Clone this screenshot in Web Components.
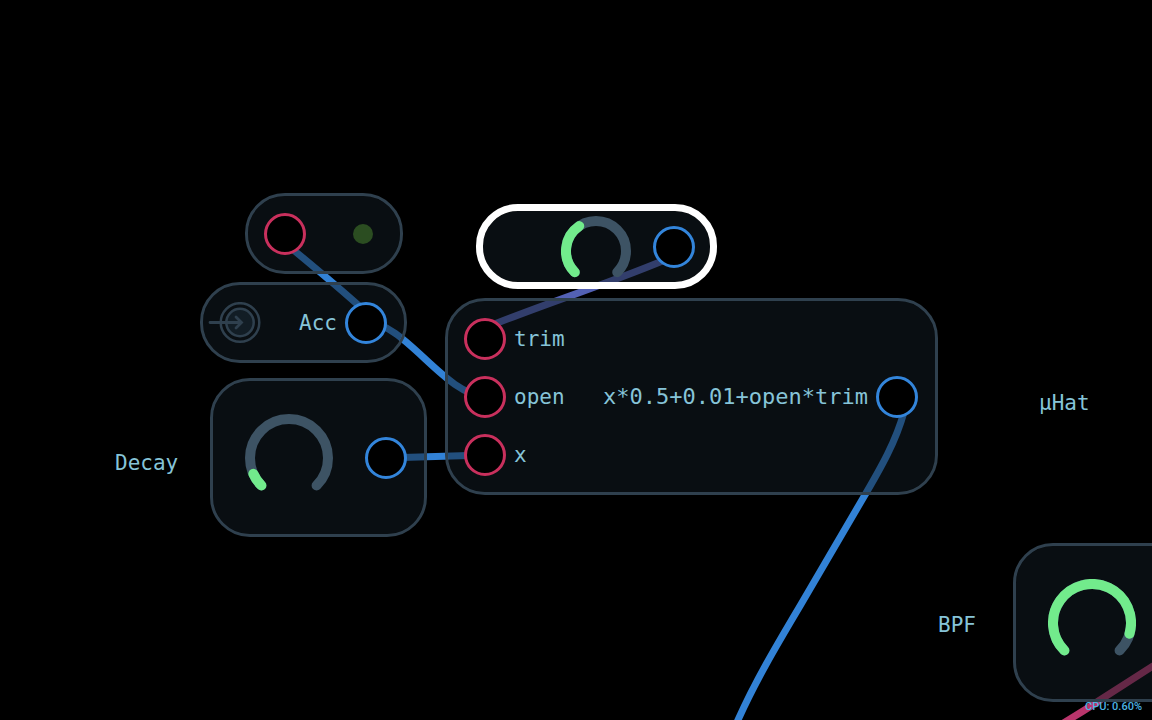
<!DOCTYPE html>
<html lang="en">
<head>
<meta charset="utf-8">
<title>Patch editor</title>
<style>
html, body { margin: 0; height: 100%; background: #000; }
body {
  font: 21px/24px "DejaVu Sans Mono", monospace;
  color: #86c4d8;
  --edge: #2f404e; --in: #c9305d; --out: #3385db; --track: #3d5364; --level: #72eb8c;
}
</style>
</head>
<body>
<patch-canvas>
  <patch-wires slot="wires"></patch-wires>

  <patch-node style="left:245px;top:193px;width:158px;height:81px">
    <patch-port kind="in" label="Light input"></patch-port>
    <patch-led></patch-led>
  </patch-node>

  <patch-node style="left:200px;top:282px;width:207px;height:81px">
    <patch-inlet></patch-inlet>
    <patch-port kind="out" label="Acc output">Acc</patch-port>
  </patch-node>

  <patch-node selected style="left:476px;top:204px;width:241px;height:85px">
    <patch-knob size="70" height="62" sweep="101" label="Trim"></patch-knob>
    <patch-port kind="out" label="Trim output"></patch-port>
  </patch-node>

  <patch-node style="left:445px;top:298px;width:493px;height:197px">
    <patch-stack>
      <patch-port kind="in" label="trim input">trim</patch-port>
      <patch-port kind="in" label="open input">open</patch-port>
      <patch-port kind="in" label="x input">x</patch-port>
    </patch-stack>
    <patch-port kind="out" label="Expression output" wide>x*0.5+0.01+open*trim</patch-port>
  </patch-node>

  <patch-node roomy style="left:210px;top:378px;width:217px;height:159px">
    <patch-knob size="88" height="88" sweep="21" label="Decay"></patch-knob>
    <patch-port kind="out" label="Decay output"></patch-port>
  </patch-node>

  <patch-node roomy style="left:1013px;top:543px;width:217px;height:159px">
    <patch-knob size="88" height="88" sweep="241" label="BPF"></patch-knob>
    <patch-port kind="out" label="BPF output"></patch-port>
  </patch-node>

  <patch-note style="left:115px;top:451px">Decay</patch-note>
  <patch-note style="left:1039px;top:391px">µHat</patch-note>
  <patch-note style="left:938px;top:613px">BPF</patch-note>

  <cpu-meter slot="status">CPU: 0.60%</cpu-meter>
</patch-canvas>

<script>
const define = (name, render) => customElements.define(name, class extends HTMLElement {
  connectedCallback() {
    if (this.shadowRoot) return;
    this.attachShadow({ mode: "open" }).innerHTML = render(this);
  }
});

define("patch-canvas", () => `
  <style>
    :host { display: block; position: relative; width: 100%; height: 100vh; overflow: hidden; background: #000; }
  </style>
  <slot name="wires"></slot><slot></slot><slot name="status"></slot>`);

define("patch-wires", () => `
  <style>
    :host { display: block; position: absolute; inset: 0; }
    svg { display: block; width: 100%; height: 100%; overflow: visible; }
    path { fill: none; stroke: #3282d6; stroke-width: 7; }
    .mod { stroke: #5361b4; }
    .audio { stroke: #b9356b; }
  </style>
  <svg aria-hidden="true">
    <path d="M285 243 C302 257 335 284 366 312"/>
    <path d="M366 322 C405 322 445 396 485 396"/>
    <path d="M386 458 L485 455"/>
    <path class="mod" d="M485 328 C540 305 620 280 674 256"/>
    <path d="M904 412 C896 441 882 466 862 500 L800 606 C775 648 755 682 738 720 L728 742"/>
    <path class="audio" d="M1050 731 Q1084 711 1100 700 L1170 655"/>
  </svg>`);

define("patch-node", () => `
  <style>
    :host {
      position: absolute; box-sizing: border-box; display: flex; align-items: center;
      justify-content: space-between; padding: 0 17px 0 16px;
      border: 3px solid var(--edge); border-radius: 40px;
      background: rgba(18, 28, 36, .5); background-clip: padding-box;
    }
    :host([selected]) { border: 7px solid #fff; border-radius: 42px; padding: 0 15px; justify-content: flex-end; gap: 22px; }
    :host([roomy]) { padding-left: 32px; }
  </style>
  <slot></slot>`);

define("patch-stack", () => `
  <style>:host { display: flex; flex-direction: column; gap: 16px; }</style>
  <slot></slot>`);

define("patch-port", el => `
  <style>
    :host { display: flex; align-items: center; gap: 8px; }
    :host([kind="out"]) { flex-direction: row-reverse; }
    :host([wide]) { font-size: 22px; }
    button {
      box-sizing: border-box; width: 42px; height: 42px; padding: 0; flex: none;
      border: 3px solid var(--${el.getAttribute("kind")}); border-radius: 50%; background: #000;
    }
  </style>
  <button type="button" aria-label="${el.getAttribute("label")}"></button><slot></slot>`);

define("patch-led", () => `
  <style>
    :host { display: block; width: 20px; height: 20px; margin-right: 10px; border-radius: 50%; background: #2b4d21; }
  </style>`);

define("patch-inlet", () => `
  <style>
    :host { display: block; margin-left: -11px; }
    svg { display: block; fill: none; stroke: var(--edge); stroke-width: 2.5; stroke-linecap: round; }
  </style>
  <svg width="54" height="42" viewBox="0 0 54 42" aria-hidden="true">
    <circle cx="32" cy="20.500" r="19.3"/>
    <circle cx="32" cy="20.500" r="13.7" fill="#121d25"/>
    <path d="M2 20.500H33M28 15L33.500 20.500L28 26" stroke-width="2.800"/>
  </svg>`);

define("patch-knob", el => {
  const size = +el.getAttribute("size"), height = +el.getAttribute("height");
  const sweep = +el.getAttribute("sweep"), c = size / 2, r = c - 5;
  const arc = degrees => {
    const at = a => (c + r * Math.cos(a * Math.PI / 180)) + " " + (c + r * Math.sin(a * Math.PI / 180));
    return `M${at(135)} A${r} ${r} 0 ${degrees > 180 ? 1 : 0} 1 ${at(135 + degrees)}`;
  };
  return `
  <style>
    :host { display: grid; width: ${size}px; height: ${height}px; }
    svg, input { grid-area: 1 / 1; width: 100%; height: 100%; margin: 0; }
    svg { display: block; fill: none; stroke-width: 10; stroke-linecap: round; }
    input { opacity: 0; }
  </style>
  <svg viewBox="0 0 ${size} ${height}" aria-hidden="true">
    <path d="${arc(270)}" stroke="var(--track)"/>
    <path d="${arc(sweep)}" stroke="var(--level)"/>
  </svg>
  <input type="range" min="0" max="270" value="${sweep}" aria-label="${el.getAttribute("label")}">`;
});

define("patch-note", () => `
  <style>:host { display: block; position: absolute; white-space: nowrap; }</style>
  <slot></slot>`);

define("cpu-meter", () => `
  <style>
    :host {
      display: block; position: absolute; right: 10px; bottom: 5px;
      font: 500 11px/16px Roboto, sans-serif; color: #4db4e4;
    }
  </style>
  <slot></slot>`);
</script>
</body>
</html>
